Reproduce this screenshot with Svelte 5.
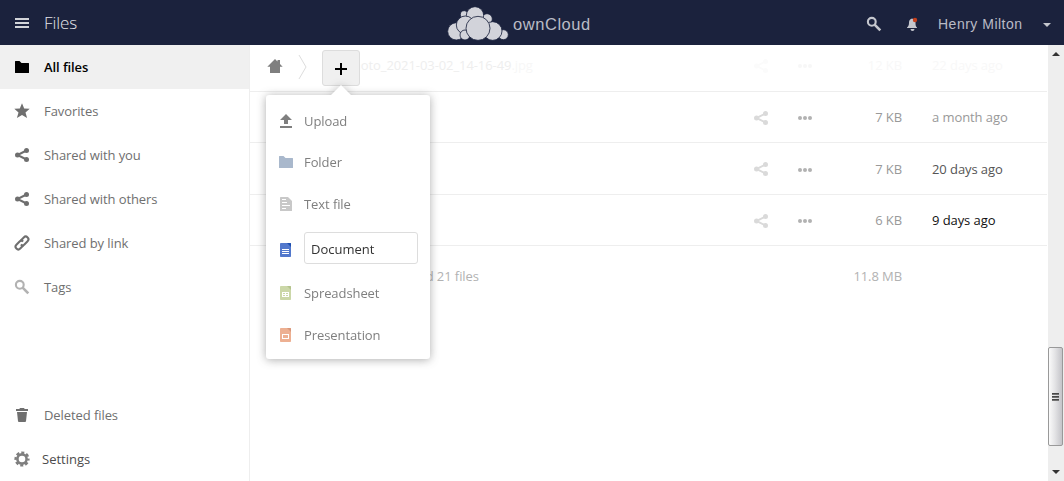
<script>
  const nav = [
    { label: 'All files', icon: 'folder', active: true },
    { label: 'Favorites', icon: 'star' },
    { label: 'Shared with you', icon: 'share' },
    { label: 'Shared with others', icon: 'share' },
    { label: 'Shared by link', icon: 'link' },
    { label: 'Tags', icon: 'search', faint: true }
  ];
  const rows = [
    { size: '12 KB', date: '22 days ago', tone: 'ghost', name: 'photo_2021-03-02_14-16-49', ext: '.jpg' },
    { size: '7 KB', date: 'a month ago', tone: 'old' },
    { size: '7 KB', date: '20 days ago', tone: 'mid' },
    { size: '6 KB', date: '9 days ago', tone: 'new' }
  ];
  const menu = [
    { label: 'Upload', icon: 'upload' },
    { label: 'Folder', icon: 'folder' },
    { label: 'Text file', icon: 'text' },
    { label: 'Document', icon: 'doc', input: true },
    { label: 'Spreadsheet', icon: 'sheet' },
    { label: 'Presentation', icon: 'slides' }
  ];
</script>

{#snippet icon(name)}
  <svg class="icon" width="16" height="16" viewBox="0 0 16 16" fill="currentColor">
    {#if name === 'folder'}
      <path d="M1.5 2H5.500l2 2H14.500a.5.5 0 0 1 .5.5v9a.5.5 0 0 1-.5.5h-13a.5.5 0 0 1-.5-.5v-11a.5.5 0 0 1 .5-.5z" />
    {:else if name === 'star'}
      <path d="M8 .3l2.200 5.300 5.500.2-4.200 3.600 1.600 5.700L8 12 2.900 15.100l1.600-5.700L.3 5.800l5.500-.2z" />
    {:else if name === 'share'}
      <circle cx="3.500" cy="8" r="2.500" /><circle cx="12.500" cy="3.500" r="2.500" /><circle cx="12.500" cy="12.500" r="2.500" />
      <path d="M12.500 3.500L3.500 8l9 4.500" fill="none" stroke="currentColor" stroke-width="2" />
    {:else if name === 'link'}
      <g fill="none" stroke="currentColor" stroke-width="2.100" transform="rotate(-45 8 8)">
        <path d="M7 10.700H2.800A2.700 2.700 0 0 1 2.800 5.300h4.500a2.500 2.500 0 0 1 2.500 2.500" />
        <path d="M9 5.300H13.200a2.700 2.700 0 0 1 0 5.400H8.700A2.500 2.500 0 0 1 6.200 8.200" />
      </g>
    {:else if name === 'search'}
      <circle cx="5.800" cy="5.800" r="3.900" fill="none" stroke="currentColor" stroke-width="2.100" />
      <path d="M8.600 8.600L14.300 14.300" stroke="currentColor" stroke-width="2.600" />
    {:else if name === 'trash'}
      <path d="M6 1h4l.7 1H14v2H2V2h3.300zM3 5h10l-1 9.200a1 1 0 0 1-1 .8H5a1 1 0 0 1-1-.8z" />
    {:else if name === 'gear'}
      <circle cx="8" cy="8" r="4.600" fill="none" stroke="currentColor" stroke-width="2.600" />
      <circle cx="8" cy="8" r="6.400" fill="none" stroke="currentColor" stroke-width="2.400" stroke-dasharray="3 2.026" stroke-dashoffset="1.500" />
    {:else if name === 'upload'}
      <path d="M8 1l6 6h-4v4H6V7H2zM2 13h12v2H2z" />
    {:else if name === 'text'}
      <path d="M2.500 1H10l4 4v9.500a.5.5 0 0 1-.5.5h-11a.5.5 0 0 1-.5-.5v-13a.5.5 0 0 1 .5-.5z" />
      <path d="M4 3.500h4M4 6.500h5M4 9.500h8M4 12.500h4" stroke="#fff" />
    {:else}
      <rect x="2" y="1" width="11" height="14" rx=".8" />
      <path class="corner" d="M9 1h3.200a.8.8 0 0 1 .8.800V5z" />
      {#if name === 'doc'}
        <path d="M4 7.500h7M4 9.500h7M4 11.500h7" stroke="#fff" />
      {:else if name === 'sheet'}
        <path fill="#fff" d="M4 7h7v5H4z" /><path d="M5 8.500h2M8 8.500h2M5 10.500h2M8 10.500h2" stroke="#cbd7a8" />
      {:else}
        <path fill="#fff" d="M4 7h7v5H4z" /><path d="M5 8h5v3H5z" />
      {/if}
    {/if}
  </svg>
{/snippet}

<div class="app">
  <header>
    <div class="left">
      <svg class="burger" width="14" height="10"><path d="M0 1h14M0 5h14M0 9h14" stroke="#d2d4d9" stroke-width="2" /></svg>
      <span class="title">Files</span>
    </div>
    <div class="brand">
      <svg width="62" height="36" viewBox="51 18 186 108">
        <g fill="#d2d3da" stroke="#1b223d" stroke-width="2.500">
          <circle cx="103" cy="44" r="12" /><circle cx="171" cy="57" r="16" />
          <circle cx="135" cy="46" r="26" />
          <circle cx="79" cy="94" r="26" /><circle cx="106" cy="75" r="27" />
          <circle cx="220" cy="104" r="15" />
          <circle cx="188" cy="93" r="28" /><circle cx="105" cy="105" r="15" />
          <circle cx="144" cy="85" r="36" />
        </g>
      </svg>
      <span>ownCloud</span>
    </div>
    <div class="right">
      <span class="find">{@render icon('search')}</span>
      <svg class="bell" width="14" height="16" viewBox="0 0 14 16">
        <path fill="#c5c7ce" d="M6 2.500c-2.500.6-3 2.500-3 4.500 0 2.500-.8 3.500-2 4.500V12h10v-.5c-1.200-1-1.500-2-1.500-4.500V4zM4.500 13h4a2 2 0 0 1-4 0z" />
        <circle cx="9" cy="4" r="2.200" fill="#c43f1c" />
      </svg>
      <span class="user">Henry Milton</span>
      <i class="caret"></i>
    </div>
  </header>

  <div class="body">
    <nav>
      {#each nav as n}
        <div class="item" class:active={n.active} class:faint={n.faint}>{@render icon(n.icon)}<span>{n.label}</span></div>
      {/each}
      <div class="item bottom">{@render icon('trash')}<span>Deleted files</span></div>
      <div class="item settings">{@render icon('gear')}<span>Settings</span></div>
    </nav>

    <main>
      {#each rows as r}
        <div class="row {r.tone}">
          <span class="name">{#if r.name}{r.name}<em>{r.ext}</em>{/if}</span>
          <span class="act">{@render icon('share')}</span>
          <svg class="dots" width="14" height="4"><circle cx="2" cy="2" r="2" /><circle cx="7" cy="2" r="2" /><circle cx="12" cy="2" r="2" /></svg>
          <span class="size">{r.size}</span>
          <span class="date">{r.date}</span>
        </div>
      {/each}
      <div class="summary"><span class="count">6 folders and 21 files</span><span class="total">11.8 MB</span></div>

      <div class="controls">
        <svg class="home" width="16" height="16" viewBox="0 0 16 16"><path fill="#7f7f7f" d="M8 1L.3 8.700H3V15h10V8.700h2.700L13 6V2h-2.500v1.500z" /></svg>
        <svg class="crumb" width="10" height="26" viewBox="0 0 10 26"><path d="M1 1l7 12-7 12" fill="none" stroke="#ddd" /></svg>
        <button class="add" aria-label="New"><svg width="12" height="12"><path d="M6 0v12M0 6h12" stroke="#000" stroke-width="2" /></svg></button>
      </div>
      <div class="popover">
        {#each menu as m}
          <div class="entry {m.icon}">{@render icon(m.icon)}<span class:field={m.input}>{m.label}</span></div>
        {/each}
      </div>
    </main>

    <div class="scroll">
      <i class="up"></i>
      <div class="thumb"><b></b><b></b><b></b></div>
      <i class="down"></i>
    </div>
  </div>
</div>

<style>
  :global(body) { margin: 0; background: #fff; overflow: hidden; }
  .app { width: 1064px; height: 481px; font: 13px/20px "Open Sans", sans-serif; letter-spacing: -.08px; color: #000; overflow: hidden; display: flex; flex-direction: column; }
  .icon { display: block; flex: none; }
  header { height: 45px; flex: none; background: #1b223d; display: grid; grid-template-columns: 447px 1fr 198px; }
  .left { display: flex; align-items: center; padding-left: 15px; }
  .burger { display: block; margin-top: 1px; }
  .title { margin-left: 15px; font-size: 17px; font-weight: 300; color: #e4e5e9; }
  .brand { display: flex; align-items: center; color: #b9bbc5; font: 16.5px/24px "Liberation Sans", sans-serif; }
  .brand svg { margin-top: 3px; }
  .brand span { margin: 2px 0 0 4px; letter-spacing: .55px; }
  .right { display: flex; align-items: center; color: #c5c7ce; }
  .find { margin: 3px 0 0; }
  .bell { margin: 2px 0 0 24px; }
  .user { font: 14px/20px "Liberation Sans", sans-serif; letter-spacing: .5px; margin: 3px 0 0 18px; color: #b9bbc5; }
  .caret { width: 0; border: 4px solid transparent; border-top-color: #c5c7ce; border-bottom: 0; margin: 4px 0 0 20px; }

  .body { flex: 1; display: flex; min-height: 0; }
  nav { width: 249px; border-right: 1px solid #eee; display: flex; flex-direction: column; color: #6f6f6f; }
  .item { height: 44px; display: flex; align-items: center; padding-left: 14px; gap: 14px; }
  .active { background: #f0f0f0; color: #000; font-weight: 600; }
  .faint .icon { color: #b2b2b2; }
  .bottom { margin-top: auto; }
  .settings { gap: 12px; color: #7f7f7f; }
  .settings span { color: #4c4c4c; letter-spacing: 0; }

  main { flex: 1; position: relative; }
  .row { height: 51px; box-sizing: border-box; border-bottom: 1px solid #eee; margin-right: 1px; display: flex; align-items: center; color: #999; }
  .row.ghost { height: 47px; color: #f8f8f8; padding-bottom: 6px; }
  .row.mid { height: 52px; }
  .name { flex: 1; padding-left: 95px; color: #eee; }
  .name em { font-style: normal; color: #f7f7f7; }
  .act { color: #dadada; margin: 1px 29px 0 0; }
  .dots { fill: #b2b2b2; margin-top: 2px; }
  .ghost .act { color: #fbfbfb; }
  .ghost .dots { fill: #f7f7f7; }
  .size { width: 90px; text-align: right; }
  .date { width: 115px; margin-left: 30px; }
  .mid .date { color: #555; }
  .new .date { color: #111; }
  .summary { display: flex; justify-content: space-between; padding: 20px 146px 0 105px; color: #b2b2b2; }

  .controls { position: absolute; left: 17px; top: 5px; display: flex; align-items: center; height: 36px; }
  .home { margin-bottom: 4px; }
  .crumb { margin: 0 14px 2px 15px; }
  .add { width: 38px; height: 36px; padding: 1px 0 0; display: flex; align-items: center; justify-content: center; background: #f0f0f0; border: 1px solid #ddd; border-radius: 3px; }
  .popover { position: absolute; left: 16px; top: 50px; width: 164px; height: 259px; padding-top: 5px; border-radius: 3px; background: #fff; color: #7f7f7f; filter: drop-shadow(0 1px 5px rgba(50,50,50,.4)); }
  .popover::before { content: ""; position: absolute; left: 65px; top: -10px; border: 10px solid transparent; border-top: 0; border-bottom-color: #fff; }
  .entry { height: 42px; display: flex; align-items: center; padding: 0 12px; gap: 10px; }
  .entry.folder { height: 40px; }
  .entry.folder .icon { color: #a9b8cc; }
  .entry.text { height: 43px; }
  .entry.text .icon { color: #c8c8c8; }
  .entry.doc { height: 46px; }
  .entry.sheet { height: 43px; }
  .entry.doc .icon { color: #5278cc; margin-top: 4px; }
  .entry.doc .corner { fill: #1e4fb0; }
  .entry.sheet .icon { color: #cbd7a8; }
  .entry.sheet .corner { fill: #b4c38c; }
  .entry.slides .icon { color: #edb092; }
  .entry.slides .corner { fill: #d9977a; }
  .field { flex: 1; height: 30px; line-height: 32px; letter-spacing: 0; padding-left: 6px; border: 1px solid #ddd; border-radius: 3px; color: #333; }

  .scroll { width: 16px; box-sizing: border-box; background: #eee; display: flex; flex-direction: column; align-items: center; }
  .up { border: 4px solid transparent; border-bottom-color: #333; border-top: 0; margin-top: 7px; }
  .thumb { box-sizing: border-box; width: 15px; height: 99px; margin: auto 1px 0 0; border: 1px solid #999; border-radius: 2px; background: linear-gradient(90deg, #fafafa, #e4e4e6 45%, #c4c4c9); display: flex; flex-direction: column; align-items: center; justify-content: center; gap: 1px; }
  .thumb b { width: 7px; height: 2px; background: linear-gradient(#333, #888); }
  .down { border: 4px solid transparent; border-top-color: #333; border-bottom: 0; margin: 24px 0 7px; }
</style>
